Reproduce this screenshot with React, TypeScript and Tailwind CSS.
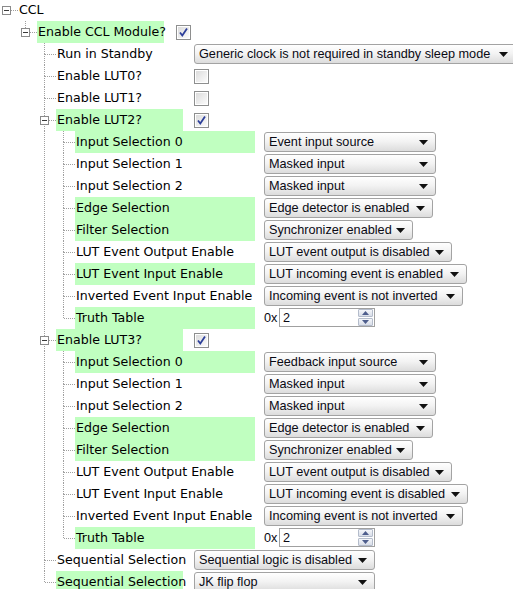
import React from "react";

type Ctrl =
  | { kind: "check"; on: boolean }
  | { kind: "select"; value: string; w: string }
  | { kind: "spin"; value: string };

type Row = {
  level: number;
  label: string;
  guides: boolean[];
  box?: boolean;
  last?: boolean;
  hl?: boolean;
  ctrl?: Ctrl;
};

const LINE = "#a0a0a0";

const lutRows = (input0: string, inEvent: string, inEventW: string, hlOut: boolean, hlIn: boolean): Row[] => {
  const g = [false, false, true];
  return [
    { level: 3, guides: g, label: "Input Selection 0", hl: true, ctrl: { kind: "select", value: input0, w: "w-[172px]" } },
    { level: 3, guides: g, label: "Input Selection 1", ctrl: { kind: "select", value: "Masked input", w: "w-[172px]" } },
    { level: 3, guides: g, label: "Input Selection 2", ctrl: { kind: "select", value: "Masked input", w: "w-[172px]" } },
    { level: 3, guides: g, label: "Edge Selection", hl: true, ctrl: { kind: "select", value: "Edge detector is enabled", w: "w-[169px]" } },
    { level: 3, guides: g, label: "Filter Selection", hl: true, ctrl: { kind: "select", value: "Synchronizer enabled", w: "w-[149px]" } },
    { level: 3, guides: g, label: "LUT Event Output Enable", hl: hlOut, ctrl: { kind: "select", value: "LUT event output is disabled", w: "w-[188px]" } },
    { level: 3, guides: g, label: "LUT Event Input Enable", hl: hlIn, ctrl: { kind: "select", value: inEvent, w: inEventW } },
    { level: 3, guides: g, label: "Inverted Event Input Enable", ctrl: { kind: "select", value: "Incoming event is not inverted", w: "w-[199px]" } },
    { level: 3, guides: g, label: "Truth Table", hl: true, last: true, ctrl: { kind: "spin", value: "2" } },
  ];
};

const rows: Row[] = [
  { level: 0, guides: [], label: "CCL", box: true, last: true },
  { level: 1, guides: [false], label: "Enable CCL Module?", box: true, last: true, hl: true, ctrl: { kind: "check", on: true } },
  { level: 2, guides: [false, false], label: "Run in Standby", ctrl: { kind: "select", value: "Generic clock is not required in standby sleep mode", w: "w-[322px]" } },
  { level: 2, guides: [false, false], label: "Enable LUT0?", ctrl: { kind: "check", on: false } },
  { level: 2, guides: [false, false], label: "Enable LUT1?", ctrl: { kind: "check", on: false } },
  { level: 2, guides: [false, false], label: "Enable LUT2?", box: true, hl: true, ctrl: { kind: "check", on: true } },
  ...lutRows("Event input source", "LUT incoming event is enabled", "w-[203px]", false, true),
  { level: 2, guides: [false, false], label: "Enable LUT3?", box: true, hl: true, ctrl: { kind: "check", on: true } },
  ...lutRows("Feedback input source", "LUT incoming event is disabled", "w-[204px]", false, false),
  { level: 2, guides: [false, false], label: "Sequential Selection", ctrl: { kind: "select", value: "Sequential logic is disabled", w: "w-[181px]" } },
  { level: 2, guides: [false, false], label: "Sequential Selection", hl: true, last: true, ctrl: { kind: "select", value: "JK flip flop", w: "w-[181px]" } },
];

// label column width + gap before the control, per level
const labelCls = ["", "w-[127px] mr-[12px]", "w-[127px] mr-[11px]", "w-[180px] mr-[9px]"];

function Guide({ on }: { on: boolean }) {
  return (
    <svg width={19} height={22} className="shrink-0" shapeRendering="crispEdges">
      {on && <line x1={6.5} y1={0} x2={6.5} y2={22} stroke={LINE} strokeDasharray="1 1" />}
    </svg>
  );
}

function Connector({ root, last, box }: { root: boolean; last?: boolean; box?: boolean }) {
  return (
    <svg width={18} height={22} className="shrink-0" shapeRendering="crispEdges">
      {!root && <line x1={6.5} y1={0} x2={6.5} y2={11} stroke={LINE} strokeDasharray="1 1" />}
      {!last && <line x1={6.5} y1={11} x2={6.5} y2={22} stroke={LINE} strokeDasharray="1 1" />}
      <line x1={7} y1={11.5} x2={18} y2={11.5} stroke={LINE} strokeDasharray="1 1" />
      {box && (
        <>
          <rect x={2.5} y={7.5} width={8} height={8} fill="white" stroke="#8a8a8a" />
          <line x1={4} y1={11.5} x2={9} y2={11.5} stroke="#3a3a3a" />
        </>
      )}
    </svg>
  );
}

function Check({ on }: { on: boolean }) {
  return (
    <svg width={15} height={15} className="shrink-0" shapeRendering="crispEdges">
      <defs>
        <linearGradient id={on ? "cbOn" : "cbOff"} x1="0" y1="0" x2="1" y2="1">
          <stop offset="0" stopColor="#dcdcdc" />
          <stop offset="1" stopColor="#fbfbfb" />
        </linearGradient>
      </defs>
      <rect x={0.5} y={0.5} width={14} height={14} fill="white" stroke="#8e8f8f" />
      <rect x={2} y={2} width={11} height={11} fill={`url(#${on ? "cbOn" : "cbOff"})`} />
      {on && (
        <path
          d="M4 7.5 L6.3 10.5 L11 3.5"
          fill="none"
          stroke="#2d3f9a"
          strokeWidth={1.8}
          shapeRendering="geometricPrecision"
        />
      )}
    </svg>
  );
}

function Select({ value, w }: { value: string; w: string }) {
  return (
    <div
      className={`${w} h-[20px] shrink-0 flex items-center justify-between rounded-[3px] border border-[#a3a3a3] bg-linear-to-b from-[#ffffff] via-[#f2f2f2] to-[#dcdcdc] pl-[4px] pr-[7px] font-['Liberation_Sans',Arial,sans-serif] text-[12.7px] leading-none text-[#0a0a14]`}
    >
      <span className="whitespace-nowrap pt-px">{value}</span>
      <svg width={9} height={5} className="shrink-0">
        <polygon points="0,0 9,0 4.5,5" fill="#111" />
      </svg>
    </div>
  );
}

function Spin({ value }: { value: string }) {
  return (
    <div className="flex items-center font-['Liberation_Sans',Arial,sans-serif] text-[12.7px] text-[#0a0a14]">
      <span className="w-[15px] pt-px">0x</span>
      <div className="flex h-[19px] w-[96px] items-center justify-between border border-[#a0a0a0] bg-white pl-[3px] pr-px">
        <span className="pt-px leading-none">{value}</span>
        <div className="flex h-[17px] w-[15px] flex-col gap-px">
          <div className="flex flex-1 items-center justify-center rounded-[1px] border border-[#b4bccb] bg-linear-to-b from-[#f4f6fa] to-[#d8dde8]">
            <svg width={7} height={4}>
              <polygon points="0,4 7,4 3.5,0" fill="#4d5d8c" />
            </svg>
          </div>
          <div className="flex flex-1 items-center justify-center rounded-[1px] border border-[#b4bccb] bg-linear-to-b from-[#f4f6fa] to-[#d8dde8]">
            <svg width={7} height={4}>
              <polygon points="0,0 7,0 3.5,4" fill="#4d5d8c" />
            </svg>
          </div>
        </div>
      </div>
    </div>
  );
}

export default function App() {
  return (
    <div className="h-[589px] w-[513px] overflow-hidden bg-white font-['DejaVu_Sans',Verdana,sans-serif] text-[12.6px] text-black">
      <div className="-mt-px flex flex-col">
        {rows.map((r, i) => (
          <div key={i} className="flex h-[22px] items-center">
            {r.guides.map((g, j) => (
              <Guide key={j} on={g} />
            ))}
            <Connector root={r.level === 0} last={r.last} box={r.box} />
            <div
              className={`${labelCls[r.level]} flex h-full shrink-0 items-center whitespace-nowrap pl-px pt-px ${
                r.hl ? "bg-[#c0ffc0]" : ""
              }`}
            >
              {r.label}
            </div>
            {r.ctrl?.kind === "check" && <Check on={r.ctrl.on} />}
            {r.ctrl?.kind === "select" && <Select value={r.ctrl.value} w={r.ctrl.w} />}
            {r.ctrl?.kind === "spin" && <Spin value={r.ctrl.value} />}
          </div>
        ))}
      </div>
    </div>
  );
}
